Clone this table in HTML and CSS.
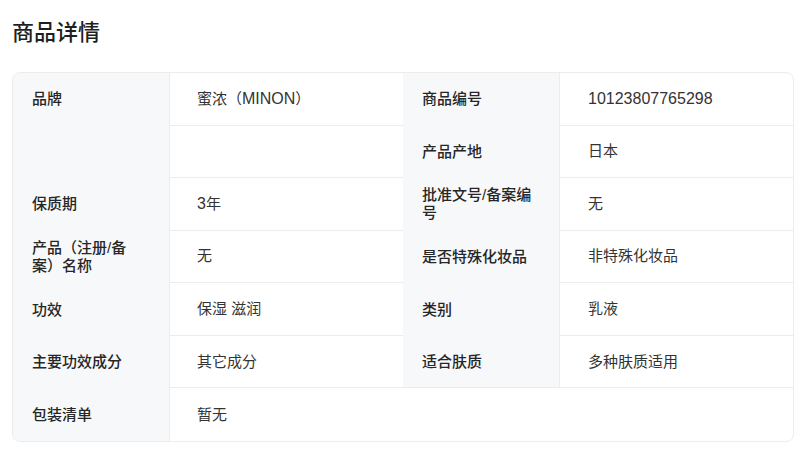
FILE: index.html
```html
<!DOCTYPE html>
<html lang="zh-CN">
<head>
<meta charset="utf-8">
<title>商品详情</title>
<link rel="stylesheet" href="styles.css">
</head>
<body>
  <h1 class="title">商品详情</h1>
  <div class="specs">
    <div class="label">品牌</div>
    <div class="value">蜜浓（<span class="latin">MINON</span>）</div>
    <div class="label label-b">商品编号</div>
    <div class="value"><span class="latin">10123807765298</span></div>

    <div class="label"></div>
    <div class="value"></div>
    <div class="label label-b">产品产地</div>
    <div class="value">日本</div>

    <div class="label">保质期</div>
    <div class="value"><span class="latin">3</span>年</div>
    <div class="label label-b">批准文号/备案编号</div>
    <div class="value">无</div>

    <div class="label">产品（注册/备案）名称</div>
    <div class="value">无</div>
    <div class="label label-b">是否特殊化妆品</div>
    <div class="value">非特殊化妆品</div>

    <div class="label">功效</div>
    <div class="value">保湿 滋润</div>
    <div class="label label-b">类别</div>
    <div class="value">乳液</div>

    <div class="label">主要功效成分</div>
    <div class="value">其它成分</div>
    <div class="label label-b label-edge">适合肤质</div>
    <div class="value">多种肤质适用</div>

    <div class="label">包装清单</div>
    <div class="value value-wide value-last">暂无</div>
  </div>
</body>
</html>
```

FILE: styles.css
```css
* {
  box-sizing: border-box;
}

html, body {
  margin: 0;
  background: #ffffff;
}

body {
  padding: 12px;
  font-family: "Liberation Sans", "Noto Sans CJK SC", sans-serif;
  color: #333333;
}

.title {
  margin: 6px 0 24px;
  font-size: 22px;
  line-height: 30px;
  font-weight: 500;
  color: #1f1f1f;
}

.specs {
  display: grid;
  grid-template-columns: 20% 30% 20% 30%;
  grid-template-rows: repeat(7, 1fr);
  height: 370px;
  border: 1px solid #ececec;
  border-radius: 8px;
  overflow: hidden;
}

.label {
  display: flex;
  align-items: center;
  padding: 0 24px 0 19px;
  background: #f7f8fa;
  font-size: 15px;
  line-height: 18px;
  font-weight: 500;
  color: #262626;
}

.label-edge {
  border-bottom: 1px solid #ececec;
}

.value {
  display: flex;
  align-items: center;
  padding: 0 16px 0 27px;
  border-left: 1px solid #ececec;
  border-bottom: 1px solid #ececec;
  font-size: 15px;
  line-height: 18px;
  color: #333333;
}

.label-b + .value {
  padding-left: 28px;
}

.value-wide {
  grid-column: 2 / 5;
}

.value-last {
  border-bottom: none;
}

.latin {
  font-size: 16px;
}
```
